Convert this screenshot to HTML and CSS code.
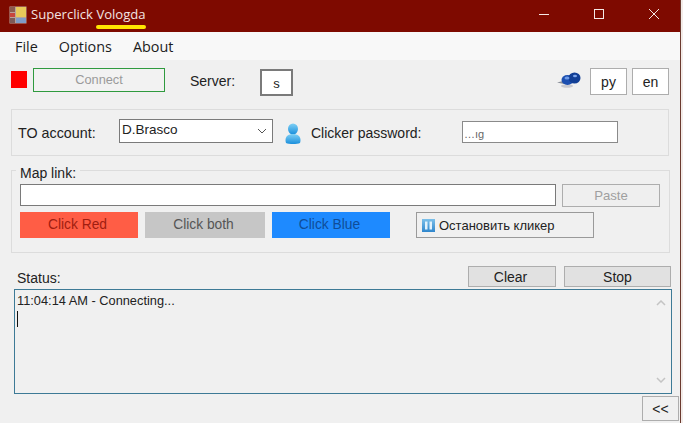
FILE: index.html
```html
<!DOCTYPE html>
<html lang="en">
<head>
<meta charset="utf-8">
<title>Superclick Vologda</title>
<link rel="stylesheet" href="styles.css">
</head>
<body>
<div class="window">
  <header class="titlebar">
    <svg class="app-icon" width="18" height="18" viewBox="0 0 18 18">
      <rect x="0.5" y="0.5" width="17" height="17" fill="#b9a29a"/>
      <rect x="1" y="1" width="5" height="5" fill="#8a5a50"/>
      <rect x="1" y="7" width="5" height="4" fill="#c8453c"/>
      <rect x="1" y="12" width="5" height="5" fill="#7d5a58"/>
      <rect x="7" y="1" width="10" height="10" fill="#e8c85a"/>
      <rect x="7" y="12" width="10" height="5" fill="#7f9cc8"/>
    </svg>
    <span class="app-title">Superclick <span class="marked">Vologda</span></span>
    <div class="win-controls">
      <svg width="12" height="12" viewBox="0 0 12 12"><path d="M1 6.500h10" stroke="#f4e8e6" fill="none"/></svg>
      <svg width="12" height="12" viewBox="0 0 12 12"><rect x="1.500" y="1.500" width="9" height="9" stroke="#f4e8e6" fill="none"/></svg>
      <svg width="12" height="12" viewBox="0 0 12 12"><path d="M1 1l10 10M11 1L1 11" stroke="#f4e8e6" fill="none"/></svg>
    </div>
  </header>
  <nav class="menubar"><span>File</span><span>Options</span><span>About</span></nav>
  <main class="content">
    <section class="toolbar">
      <span class="status-light"></span>
      <button class="btn connect">Connect</button>
      <span class="server-label">Server:</span>
      <span class="server-box">s</span>
      <svg class="pin" width="24" height="18" viewBox="0 0 24 18">
        <path d="M0 11.500l6-1.500 1 3z" fill="#8a8f99"/>
        <ellipse cx="10" cy="15" rx="6" ry="1.800" fill="#c9c9cf"/>
        <ellipse cx="10.500" cy="9" rx="6" ry="5" fill="#1c4fb0"/>
        <ellipse cx="17.500" cy="7" rx="6" ry="5.500" fill="#123f96"/>
        <ellipse cx="10" cy="7" rx="2.500" ry="1.500" fill="#6f9be8"/>
        <ellipse cx="18" cy="5" rx="2" ry="1.200" fill="#7ea6ec"/>
      </svg>
      <button class="btn lang">py</button>
      <button class="btn lang">en</button>
    </section>
    <section class="group account">
      <span class="acc-label">TO account:</span>
      <div class="select"><span>D.Brasco</span>
        <svg width="10" height="6" viewBox="0 0 10 6"><path d="M1 1l4 4 4-4" stroke="#555" fill="none"/></svg>
      </div>
      <svg class="user" width="16" height="21" viewBox="0 0 16 21">
        <defs><linearGradient id="u" x1="0" y1="0" x2="0" y2="1"><stop offset="0" stop-color="#7fd0f5"/><stop offset="1" stop-color="#1b8fdc"/></linearGradient></defs>
        <ellipse cx="8" cy="6" rx="5" ry="5.500" fill="url(#u)"/>
        <path d="M1 20c-2-6 2-9 7-9s9 3 7 9c-3 1.300-11 1.300-14 0z" fill="url(#u)"/>
      </svg>
      <span class="pass-label">Clicker password:</span>
      <div class="password">…ıɡ</div>
    </section>
    <section class="group map">
      <span class="legend">Map link:</span>
      <div class="link-row">
        <div class="link-input"></div>
        <button class="btn paste">Paste</button>
      </div>
      <div class="click-row">
        <button class="click red">Click Red</button>
        <button class="click both">Click both</button>
        <button class="click blue">Click Blue</button>
        <button class="btn stopper">
          <svg width="13" height="13" viewBox="0 0 13 13"><defs><linearGradient id="p" x1="0" y1="0" x2="0" y2="1"><stop offset="0" stop-color="#7cc0ea"/><stop offset="1" stop-color="#2f86cc"/></linearGradient></defs><rect width="13" height="13" fill="url(#p)"/><rect x="3" y="2.500" width="2.500" height="8" fill="#e2f2fc"/><rect x="7.500" y="2.500" width="2.500" height="8" fill="#e2f2fc"/></svg>
          Остановить кликер
        </button>
      </div>
    </section>
    <section class="status-head">
      <span class="status-label">Status:</span>
      <button class="btn flat clear">Clear</button>
      <button class="btn flat stop">Stop</button>
    </section>
    <section class="log">
      <div class="log-text">11:04:14 AM - Connecting...<i class="caret"></i></div>
      <div class="scroll">
        <svg width="10" height="6" viewBox="0 0 10 6"><path d="M1 5l4-4 4 4" stroke="#c4c4c4" stroke-width="1.500" fill="none"/></svg>
        <svg width="10" height="6" viewBox="0 0 10 6"><path d="M1 1l4 4 4-4" stroke="#c4c4c4" stroke-width="1.500" fill="none"/></svg>
      </div>
    </section>
    <div class="foot"><button class="btn more">&lt;&lt;</button></div>
  </main>
</div>
</body>
</html>
```
FILE: styles.css
```css
* { box-sizing: border-box; }
html, body { margin: 0; height: 100%; }
body {
  width: 683px;
  height: 423px;
  overflow: hidden;
  background: #f3ece9;
  font-family: "Liberation Sans", Arial, sans-serif;
  font-size: 14px;
  color: #222;
}
.window { width: 681px; height: 423px; background: #f0f0f0; border-right: 1px solid #6b3a2f; }
.titlebar {
  height: 32px;
  background: #7e0a00;
  display: flex;
  align-items: center;
  padding-left: 9px;
  color: #f3e4e1;
}
.app-icon { margin-right: 4px; margin-top: -3px; }
.app-title { font-family: "Open Sans", sans-serif; font-size: 13.100px; margin-top: -4px; }
.marked { position: relative; }
.marked::after {
  content: "";
  position: absolute;
  left: 0; right: 0;
  bottom: -6px;
  height: 4px;
  border-radius: 2px;
  background: #ffe600;
}
.win-controls {
  margin-left: auto;
  display: flex;
  gap: 43px;
  padding-right: 20px;
  margin-top: -4px;
}
.menubar {
  height: 28px;
  background: #f8f8f8;
  display: flex;
  gap: 21px;
  align-items: center;
  padding-left: 15px;
  font-family: "Open Sans", sans-serif;
  font-size: 14.400px;
  color: #1c1c1c;
}
.content { padding: 8px 0 0; }
.btn {
  font: inherit;
  background: #f2f2f2;
  border: 1px solid #adadad;
  color: #222;
  padding: 0;
}
.toolbar { display: flex; align-items: flex-start; height: 41px; padding-left: 11px; }
.status-light { width: 16px; height: 17px; background: #ff0000; margin: 3px 6px 0 0; }
.connect { width: 132px; height: 24px; border-color: #2f9a3e; color: #9a9a9a; font-size: 12.800px; padding-bottom: 1px; }
.server-label { margin: 5px 0 0 25px; width: 70px; }
.server-box {
  width: 33px; height: 27px;
  border: 2px solid #7a7a7a;
  background: #fff;
  margin-top: 1px;
  text-align: center;
  line-height: 26px;
  font-size: 13px;
}
.pin { margin: 3px 9px 0 264px; }
.lang { width: 37px; height: 27px; background: #fff; margin-right: 5px; }
.group { border: 1px solid #dcdcdc; }
.account {
  margin-left: 11px;
  width: 658px;
  height: 47px;
  display: flex;
  align-items: center;
  padding-left: 6px;
}
.acc-label { width: 101px; font-size: 14.300px; }
.select {
  width: 154px; height: 24px;
  background: #fff;
  border: 1px solid #7a7a7a;
  display: flex;
  justify-content: space-between;
  align-items: center;
  padding: 0 5px 4px 2px;
  margin-top: -3px;
  font-size: 13.500px;
}
.select svg { margin-top: 4px; }
.user { margin: 2px 0 0 12px; }
.pass-label { margin-left: 10px; width: 151px; }
.password {
  width: 156px; height: 22px;
  background: #fff;
  border: 1px solid #8a8a8a;
  font-size: 11px;
  line-height: 11px;
  color: #666;
  padding: 7px 0 0 1px;
  overflow: hidden;
  margin-top: -1px;
}
.map {
  position: relative;
  margin: 14px 0 0 11px;
  width: 659px;
  height: 83px;
  padding: 13px 0 0 8px;
}
.legend {
  position: absolute;
  left: 4px; top: -6px;
  background: #f0f0f0;
  padding: 0 4px;
  line-height: 16px;
}
.link-row { display: flex; gap: 6px; align-items: flex-start; }
.link-input { width: 536px; height: 22px; background: #fff; border: 1px solid #7a7a7a; }
.paste { width: 98px; height: 23px; color: #9f9f9f; background: #efefef; font-size: 13.200px; }
.click-row { display: flex; align-items: flex-start; margin-top: 5px; gap: 7px; }
.click { height: 26px; border: 0; font: inherit; font-size: 13.800px; padding: 0 3px 2px 0; width: 118px; }
.red { background: #ff5d45; color: #a11d10; }
.both { background: #c6c6c6; color: #555; width: 120px; }
.blue { background: #1e8aff; color: #0f4d99; }
.stopper {
  margin-left: 19px;
  width: 178px; height: 26px;
  background: #f0f0f0;
  border-color: #9a9a9a;
  display: flex;
  align-items: center;
  gap: 4px;
  padding-left: 5px;
  font-size: 13px;
}
.status-head { display: flex; align-items: flex-start; height: 36px; margin-top: 0; padding-top: 13px; padding-left: 17px; }
.status-label { width: 451px; margin-top: 4px; }
.flat { background: #e1e1e1; height: 21px; }
.clear { width: 88px; margin-right: 8px; padding-right: 3px; }
.stop { width: 107px; }
.log {
  margin-left: 14px;
  width: 658px;
  height: 105px;
  border: 1px solid #3d7a96;
  display: flex;
  justify-content: space-between;
}
.log-text { padding: 3px 0 0 2px; font-size: 12.800px; }
.caret { display: block; width: 1px; height: 16px; background: #111; margin-top: 3px; }
.scroll {
  width: 21px;
  background: #f2f2f2;
  display: flex;
  flex-direction: column;
  justify-content: space-between;
  align-items: center;
  padding: 10px 0;
}
.foot { display: flex; justify-content: flex-end; padding: 2px 1px 0 0; }
.more { width: 37px; height: 25px; background: #f0f0f0; }
```
